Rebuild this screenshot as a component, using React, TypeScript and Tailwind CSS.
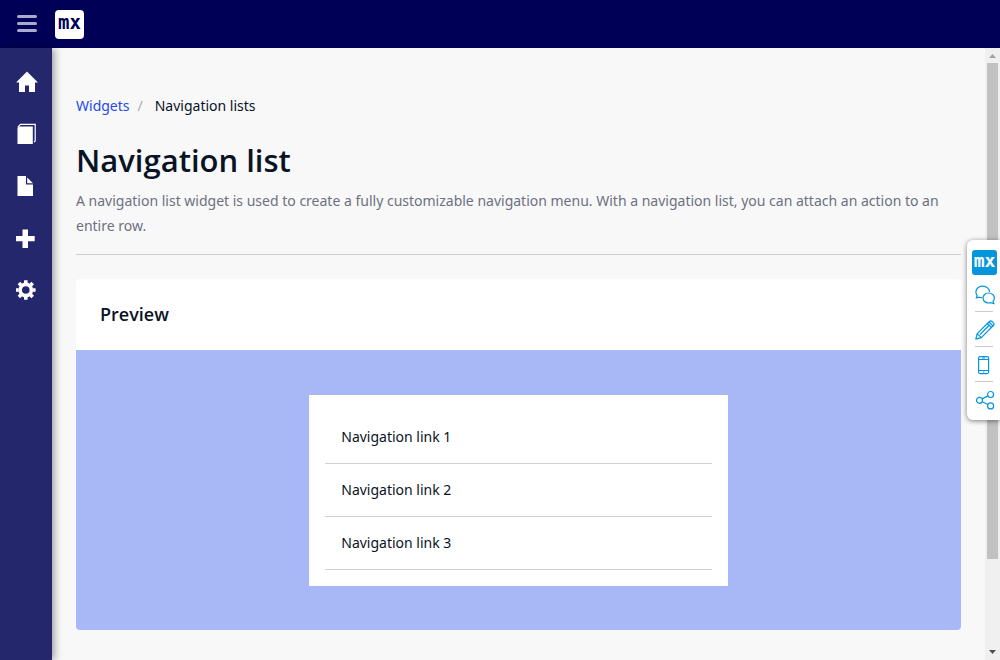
import type { ReactNode } from "react";

const sidebarItems: { label: string; icon: ReactNode }[] = [
  {
    label: "Home",
    icon: (
      <path d="M11 .6 L21.5 11 V11.6 H19 V21 H13 V14.5 H9 V21 H3 V11.6 H.5 V11 Z" />
    ),
  },
  {
    label: "Pages",
    icon: (
      <>
        <path d="M1.5 4.5 L3.5 3.5 H16.8 V21 H1.5 Z" />
        <path d="M2 4 L4.5 1.4 H19.2 V18 L18 19.2" fill="none" stroke="currentColor" strokeWidth="1.2" />
      </>
    ),
  },
  {
    label: "Documents",
    icon: <path d="M1.5 1 H10 V9.5 H17 V21 H1.5 Z M11.2 2.5 L17 8.3 H11.2 Z" />,
  },
  {
    label: "Add",
    icon: <path d="M6.5 2.5 H12 V9 H18.7 V14.2 H12 V21 H6.5 V14.2 H0 V9 H6.5 Z" />,
  },
  {
    label: "Settings",
    icon: (
      <>
        <circle cx="9.8" cy="11" r="5.6" fill="none" stroke="currentColor" strokeWidth="3.6" />
        <path
          d="M9.8 1.2 V4 M9.8 18 V20.8 M0 11 H2.8 M16.8 11 H19.6 M2.9 4.1 L5 6.2 M14.6 15.8 L16.7 17.9 M2.9 17.9 L5 15.8 M14.6 6.2 L16.7 4.1"
          stroke="currentColor"
          strokeWidth="3.6"
        />
      </>
    ),
  },
];

const tools: { label: string; icon: ReactNode }[] = [
  {
    label: "Feedback",
    icon: (
      <>
        <path d="M7.2 12.6 C6 12.7 5 12.5 4.3 12.2 L1.2 13 L2.2 10.6 C-.8 6.6 2 1.2 7.7 1.2 C11.6 1.2 14.4 3.8 14.6 7" />
        <path d="M13.6 8 C17 8 19.4 10.3 19.4 13 C19.4 14.4 18.9 15.5 18 16.4 L19 18.8 L15.9 17.7 C11.8 18.8 8 16.6 8 13 C8 10.3 10.4 8 13.6 8 Z" />
      </>
    ),
  },
  {
    label: "Edit",
    icon: (
      <path d="M.8 19.2 L2.2 13.6 L14.4 1.5 C15.4 .6 16.4 .8 17.2 1.6 L18.4 2.8 C19.2 3.7 19.3 4.6 18.4 5.5 L6.3 17.7 Z M2.2 13.6 L6.3 17.7 M12.4 3.5 L16.5 7.6 M14 2 L18 6 M5 14.5 L14 5.5" />
    ),
  },
  {
    label: "Mobile view",
    icon: (
      <>
        <rect x="3.6" y="1.6" width="10" height="17" rx="1.5" />
        <path d="M3.6 4.5 H13.6 M3.6 15.5 H13.6 M7 3 H10 M8 17 H9.4" />
      </>
    ),
  },
  {
    label: "Share",
    icon: (
      <>
        <circle cx="4.5" cy="10.3" r="3" />
        <circle cx="15.6" cy="4.5" r="3" />
        <circle cx="15.6" cy="15.9" r="3" />
        <path d="M7.2 8.9 L12.9 5.9 M7.2 11.7 L12.9 14.5" />
      </>
    ),
  },
];

const links = ["Navigation link 1", "Navigation link 2", "Navigation link 3"];

function Header() {
  return (
    <header className="flex h-12 shrink-0 items-center gap-[18px] bg-[#000057] px-[17px]">
      <button type="button" aria-label="Toggle sidebar" className="text-[#aaaad0]">
        <svg width="20" height="18" viewBox="0 0 20 18" fill="currentColor" className="block">
          <rect width="20" height="3" y="0" rx="1.5" />
          <rect width="20" height="3" y="7" rx="1.5" />
          <rect width="20" height="3" y="14" rx="1.5" />
        </svg>
      </button>
      <a
        href="#"
        className="flex size-[29px] items-center justify-center rounded-sm bg-white pb-1 font-['DejaVu_Sans_Mono',monospace] text-[19px] leading-none font-bold text-[#000057]"
      >
        mx
      </a>
    </header>
  );
}

function Sidebar() {
  return (
    <nav className="z-10 flex w-[52px] shrink-0 flex-col bg-[#24276c] pt-2 text-white shadow-[2px_0_8px_rgba(0,0,0,0.4)]">
      {sidebarItems.map((item) => (
        <a key={item.label} href="#" aria-label={item.label} className="flex h-[52px] items-center pl-4">
          <svg width="22" height="22" viewBox="0 0 22 22" fill="currentColor">
            {item.icon}
          </svg>
        </a>
      ))}
    </nav>
  );
}

function Scrollbar() {
  return (
    <div aria-hidden="true" className="flex w-[15px] shrink-0 flex-col items-center bg-[#f0f0f0]">
      <svg width="15" height="15" viewBox="0 0 15 15" className="shrink-0">
        <path d="M4 10 L7.5 6 L11 10 Z" fill="#a3a3a3" />
      </svg>
      <div className="w-[11px] grow-[496] bg-[#c1c1c1]" />
      <div className="grow-[86]" />
      <svg width="15" height="15" viewBox="0 0 15 15" className="shrink-0">
        <path d="M4 5 L7.5 9 L11 5 Z" fill="#505050" />
      </svg>
    </div>
  );
}

function ToolPanel() {
  return (
    <aside className="absolute top-60 right-0 z-20 flex w-[33px] flex-col items-center rounded-l-md bg-white pt-[10px] pb-[3px] text-[#0595db] shadow-[0_1px_5px_rgba(0,0,0,0.5)]">
      <a
        href="#"
        className="mr-[3px] flex size-[25px] items-center justify-center self-end rounded-[3px] bg-[#0595db] pb-1 font-['DejaVu_Sans_Mono',monospace] text-lg leading-none font-bold text-white"
      >
        mx
      </a>
      <ul className="w-[18px] divide-y divide-[#cccccc]">
        {tools.map((tool) => (
          <li key={tool.label} className="h-[35px] pt-2 first:h-[37px] first:pt-[10px]">
            <button type="button" aria-label={tool.label} className="block">
              <svg
                width="20"
                height="20"
                viewBox="0 0 20 20"
                fill="none"
                stroke="currentColor"
                strokeWidth="1.2"
                strokeLinejoin="round"
                className="max-w-none"
              >
                {tool.icon}
              </svg>
            </button>
          </li>
        ))}
      </ul>
    </aside>
  );
}

export default function App() {
  return (
    <div className="relative flex h-screen flex-col overflow-hidden bg-[#f8f8f8] font-['Noto_Sans','Open_Sans',sans-serif] text-sm text-[#0a1325]">
      <Header />
      <div className="flex min-h-0 flex-1">
        <Sidebar />
        <main className="min-w-0 flex-1 overflow-hidden px-6 pt-12">
          <nav aria-label="Breadcrumb">
            <ol className="flex leading-5">
              <li>
                <a href="#" className="text-[#264ae5]">
                  Widgets
                </a>
              </li>
              <li aria-hidden="true" className="pr-3 pl-2 text-[#a9acb3]">
                /
              </li>
              <li>Navigation lists</li>
            </ol>
          </nav>
          <h1 className="mt-6 font-['Open_Sans',sans-serif] text-[31px] leading-10 font-semibold">Navigation list</h1>
          <p className="mt-2 border-b border-[#ced0d3] pb-4 leading-[25px] text-[#6c7180]">
            A navigation list widget is used to create a fully customizable navigation menu. With a navigation list,
            you can attach an action to an entire row.
          </p>
          <section className="mt-6 overflow-hidden rounded bg-white">
            <h2 className="px-6 py-[23px] font-['Open_Sans',sans-serif] text-lg leading-[25px] font-semibold">
              Preview
            </h2>
            <div className="flex justify-center bg-[#a8b7f6] pt-[45px] pb-11">
              <div className="w-1/2 px-3">
                <ul className="bg-white p-4">
                  {links.map((link) => (
                    <li key={link} className="border-b border-[#ced0d3]">
                      <a href="#" className="block p-4 leading-5">
                        {link}
                      </a>
                    </li>
                  ))}
                </ul>
              </div>
            </div>
          </section>
        </main>
        <Scrollbar />
      </div>
      <ToolPanel />
    </div>
  );
}
